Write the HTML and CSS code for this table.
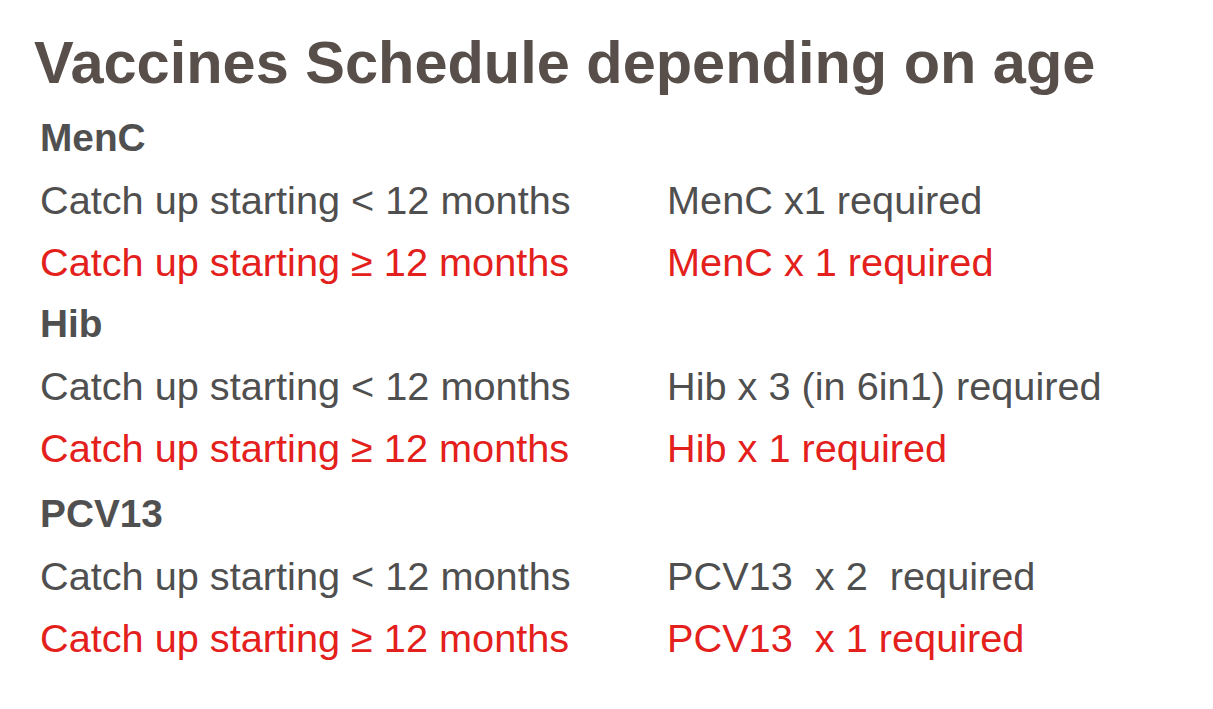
FILE: index.html
```html
<!DOCTYPE html>
<html lang="en">
<head>
<meta charset="utf-8">
<title>Vaccines Schedule depending on age</title>
<link rel="stylesheet" href="styles.css">
</head>
<body>
<main class="slide">
  <h1 class="title">Vaccines Schedule depending on age</h1>
  <div class="schedule">
    <div class="heading">MenC</div>
    <div class="cell">Catch up starting &lt; 12 months</div>
    <div class="cell">MenC x1 required</div>
    <div class="cell red">Catch up starting ≥ 12 months</div>
    <div class="cell red">MenC x 1 required</div>

    <div class="heading">Hib</div>
    <div class="cell">Catch up starting &lt; 12 months</div>
    <div class="cell">Hib x 3 (in 6in1) required</div>
    <div class="cell red">Catch up starting ≥ 12 months</div>
    <div class="cell red">Hib x 1 required</div>

    <div class="heading heading-spaced">PCV13</div>
    <div class="cell">Catch up starting &lt; 12 months</div>
    <div class="cell">PCV13&nbsp; x 2&nbsp; required</div>
    <div class="cell red">Catch up starting ≥ 12 months</div>
    <div class="cell red">PCV13&nbsp; x 1 required</div>
  </div>
</main>
</body>
</html>
```

FILE: styles.css
```css
html, body {
  margin: 0;
  padding: 0;
  background: #ffffff;
}

.slide {
  width: 1213px;
  height: 709px;
  box-sizing: border-box;
  padding: 33px 0 0 34px;
  font-family: "Liberation Sans", Arial, sans-serif;
  overflow: hidden;
}

.title {
  margin: 0;
  font-size: 59.5px;
  line-height: 59.5px;
  font-weight: bold;
  color: #594f4a;
}

.schedule {
  display: grid;
  grid-template-columns: 627px auto;
  margin-top: 14px;
  padding-left: 6px;
  font-size: 39.7px;
  line-height: 62px;
  color: #4f4f4f;
}

.heading {
  grid-column: 1 / -1;
  font-weight: bold;
  font-size: 38.8px;
  color: #505050;
}

.heading-spaced {
  margin-top: 4px;
}

.cell {
  white-space: nowrap;
}

.red {
  color: #e3201b;
}
```
